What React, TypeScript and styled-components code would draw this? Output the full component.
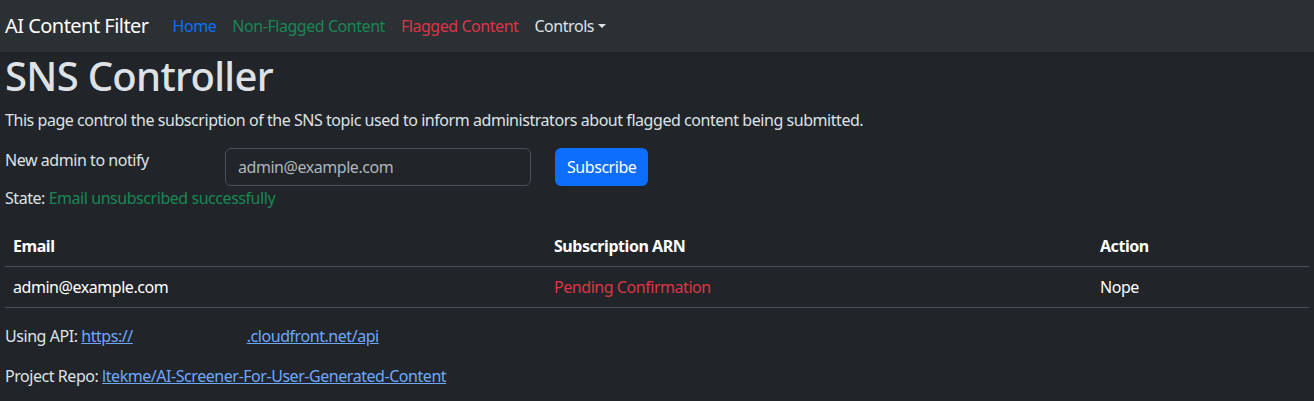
import React from "react";
import styled, { createGlobalStyle } from "styled-components";

const Global = createGlobalStyle`
  html, body { margin: 0; padding: 0; background: #212529; }
  body {
    font-family: "Noto Sans", "Open Sans", sans-serif;
    font-size: 16px;
    line-height: 1.5;
    letter-spacing: -0.45px;
    color: #dee2e6;
  }
  * { box-sizing: border-box; }
`;

const Navbar = styled.nav`
  height: 52px;
  background: #2b3035;
  display: flex;
  align-items: center;
  padding: 0 5px;
`;

const Brand = styled.span`
  font-size: 20px;
  letter-spacing: -0.53px;
  color: #fff;
  margin-right: 16px;
`;

const NavLink = styled.span<{ $color: string }>`
  color: ${(p) => p.$color};
  padding: 8px;
  display: inline-flex;
  align-items: center;
`;

const Caret = styled.span`
  display: inline-block;
  margin-left: 4px;
  border-top: 4.8px solid currentColor;
  border-left: 4.8px solid transparent;
  border-right: 4.8px solid transparent;
`;

const Main = styled.main`
  padding: 0 5px;
`;

const Title = styled.h1`
  margin: 0 0 8px;
  font-size: 40px;
  font-weight: 500;
  line-height: 1.2;
  letter-spacing: -0.7px;
`;

const Para = styled.p`
  margin: 0 0 16px;
`;

const FormRow = styled.div`
  display: flex;
  align-items: flex-start;
`;

const Label = styled.label`
  width: 220px;
`;

const Input = styled.input`
  width: 306px;
  height: 38px;
  background: #212529;
  border: 1px solid #495057;
  border-radius: 6px;
  color: #adb5bd;
  font: inherit;
  letter-spacing: -0.45px;
  padding: 6px 12px;
  margin-right: 24px;
  &::placeholder { color: #adb5bd; }
`;

const Button = styled.button`
  height: 38px;
  background: #0d6efd;
  color: #fff;
  border: none;
  border-radius: 6px;
  padding: 0 12px;
  font: inherit;
  letter-spacing: -0.45px;
`;

const State = styled.div``;

const Green = styled.span`
  color: #198754;
`;

const Table = styled.div`
  margin-top: 16px;
  display: grid;
  grid-template-columns: 541px 546px 1fr;
`;

const Cell = styled.div<{ $head?: boolean; $color?: string }>`
  padding: 8px;
  border-bottom: 1px solid #495057;
  font-weight: ${(p) => (p.$head ? 700 : 400)};
  color: ${(p) => p.$color || "#fff"};
`;

const Footer = styled.p`
  margin: 16px 0 0;
`;

const Link = styled.a`
  color: #6ea8fe;
  text-decoration: underline;
`;

const Gap = styled.span`
  display: inline-block;
  width: 114px;
`;

export default function App() {
  return (
    <>
      <Global />
      <Navbar>
        <Brand>AI Content Filter</Brand>
        <NavLink $color="#0d6efd">Home</NavLink>
        <NavLink $color="#198754">Non-Flagged Content</NavLink>
        <NavLink $color="#dc3545">Flagged Content</NavLink>
        <NavLink $color="#dee2e6">
          Controls<Caret />
        </NavLink>
      </Navbar>
      <Main>
        <Title>SNS Controller</Title>
        <Para>
          This page control the subscription of the SNS topic used to inform
          administrators about flagged content being submitted.
        </Para>
        <FormRow>
          <Label>New admin to notify</Label>
          <Input placeholder="admin@example.com" />
          <Button>Subscribe</Button>
        </FormRow>
        <State>
          State: <Green>Email unsubscribed successfully</Green>
        </State>
        <Table>
          <Cell $head>Email</Cell>
          <Cell $head>Subscription ARN</Cell>
          <Cell $head>Action</Cell>
          <Cell>admin@example.com</Cell>
          <Cell $color="#dc3545">Pending Confirmation</Cell>
          <Cell>Nope</Cell>
        </Table>
        <Footer>
          Using API:{" "}
          <Link href="#">
            https://<Gap />.cloudfront.net/api
          </Link>
        </Footer>
        <Footer>
          Project Repo:{" "}
          <Link href="#">ltekme/AI-Screener-For-User-Generated-Content</Link>
        </Footer>
      </Main>
    </>
  );
}
